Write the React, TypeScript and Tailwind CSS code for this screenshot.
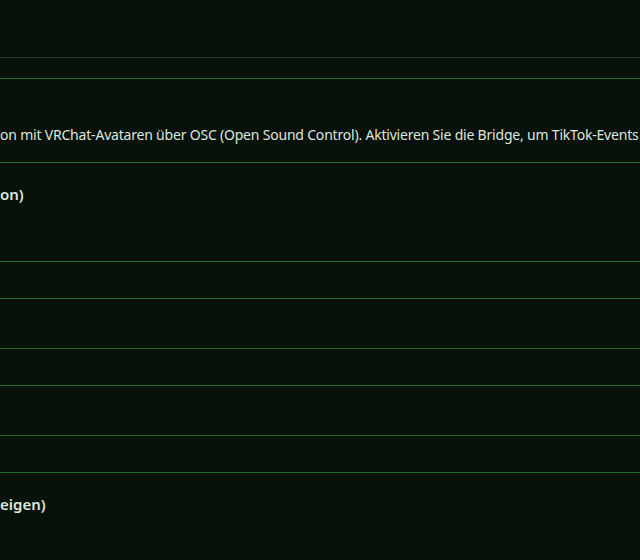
import React from 'react';

// Settings panel, seen through a window narrower than the page: only the visible slice is drawn.
function Field() {
  return <div className="h-[38px] border-y border-[#1f6b2a]" />;
}

export default function App() {
  return (
    <div
      className="h-[560px] w-[640px] overflow-hidden bg-[#08110a] text-[#dde8dd]"
      style={{ fontFamily: '"Noto Sans", "DejaVu Sans", sans-serif' }}
    >
      <div className="h-[58px] border-b border-[#1e3a22]" />
      <div className="mt-[20px] border-t border-[#1f6b2a]">
        <p className="h-[84px] whitespace-nowrap border-b border-[#1f6b2a] pt-[46px] text-[14px] leading-[20px] tracking-[-0.2px]">
          on mit VRChat-Avataren über OSC (Open Sound Control). Aktivieren Sie die Bridge, um TikTok-Events
        </p>
        <h3 className="mt-[19px] whitespace-nowrap text-[15px] font-semibold leading-[24px]">on)</h3>
        <div className="mt-[55px] flex flex-col gap-[49px]">
          <Field />
          <Field />
          <Field />
        </div>
        <h3 className="mt-[19px] whitespace-nowrap text-[15px] font-semibold leading-[24px]">eigen)</h3>
      </div>
    </div>
  );
}
